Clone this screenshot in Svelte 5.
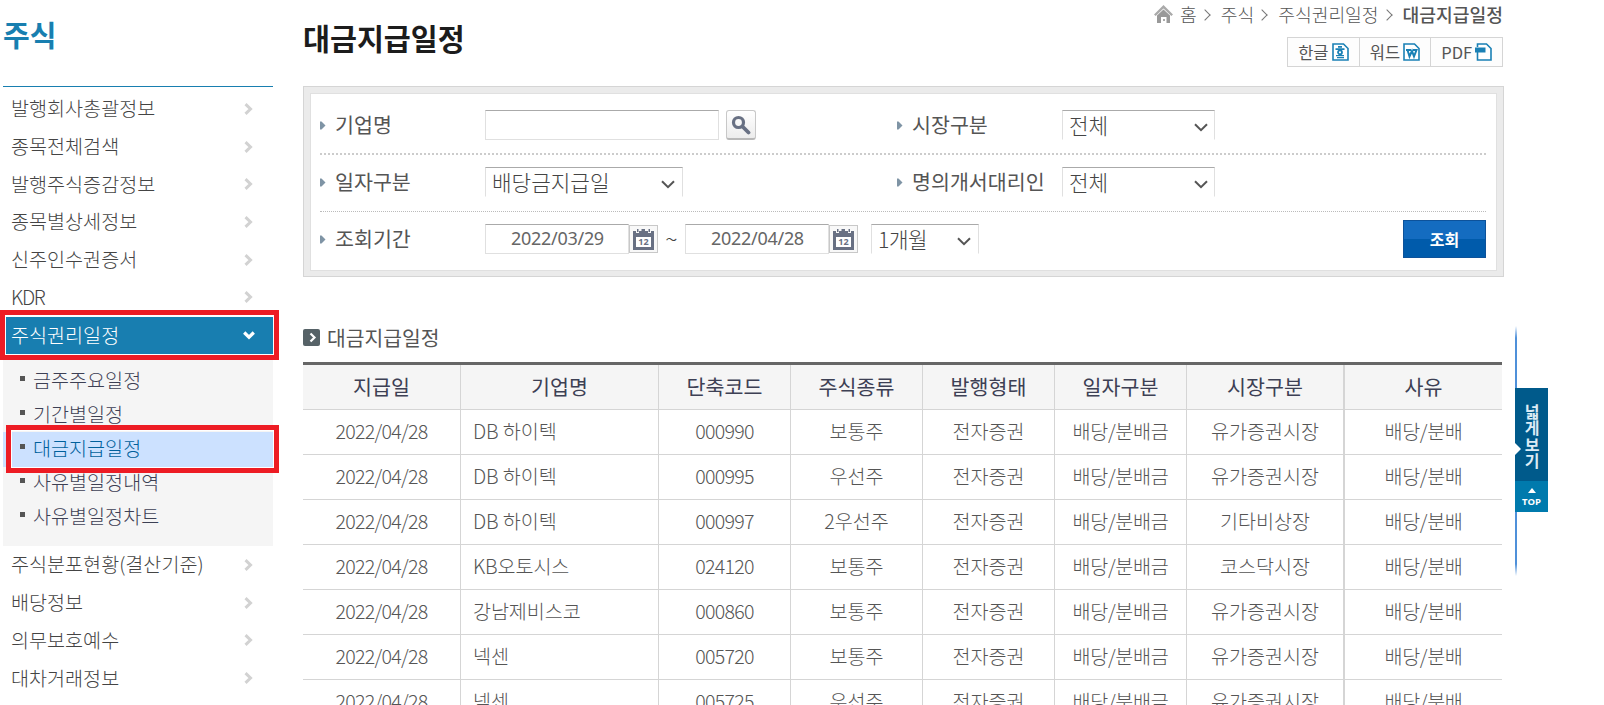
<script lang="ts">
  type MenuItem = { label: string; active?: boolean; children?: string[] };

  const menu: MenuItem[] = [
    { label: '발행회사총괄정보' },
    { label: '종목전체검색' },
    { label: '발행주식증감정보' },
    { label: '종목별상세정보' },
    { label: '신주인수권증서' },
    { label: 'KDR' },
    {
      label: '주식권리일정',
      active: true,
      children: ['금주주요일정', '기간별일정', '대금지급일정', '사유별일정내역', '사유별일정차트']
    },
    { label: '주식분포현황(결산기준)' },
    { label: '배당정보' },
    { label: '의무보호예수' },
    { label: '대차거래정보' }
  ];

  const columns = ['지급일', '기업명', '단축코드', '주식종류', '발행형태', '일자구분', '시장구분', '사유'];

  const rows = [
    ['DB 하이텍', '000990', '보통주', '유가증권시장'],
    ['DB 하이텍', '000995', '우선주', '유가증권시장'],
    ['DB 하이텍', '000997', '2우선주', '기타비상장'],
    ['KB오토시스', '024120', '보통주', '코스닥시장'],
    ['강남제비스코', '000860', '보통주', '유가증권시장'],
    ['넥센', '005720', '보통주', '유가증권시장'],
    ['넥센', '005725', '우선주', '유가증권시장']
  ];

  let current = '대금지급일정';
  let startDate = '2022/03/29';
  let endDate = '2022/04/28';
</script>

{#snippet arrow()}
  <svg class="arrow" width="6" height="9" viewBox="0 0 6 9"><path d="M0 0.5h1.5L5.5 4.5 1.5 8.5H0z" fill="#7f94a5" /></svg>
{/snippet}

{#snippet select(text: string, size: string)}
  <div class="select {size}">
    <span>{text}</span>
    <svg width="14" height="9" viewBox="0 0 14 9"><path d="M1 1.2l6 6 6-6" fill="none" stroke="#555" stroke-width="2" /></svg>
  </div>
{/snippet}

{#snippet dateField(value: string)}
  <div class="date">
    <div class="field">{value}</div>
    <button class="cal" aria-label="달력">
      <svg width="21" height="21" viewBox="0 0 21 21">
        <path d="M0 2h3v2h3V2h9v2h3V2h3v19H0z" fill="#687083" />
        <path d="M4 0h1.5v3H4zM8.5 0H12v2H8.5zM15.5 0H17v3h-1.5z" fill="#687083" />
        <rect x="3" y="8" width="15" height="10" fill="#fff" />
        <text x="10.5" y="16.3" text-anchor="middle" font-size="9" font-weight="700" fill="#687083">12</text>
      </svg>
    </button>
  </div>
{/snippet}

<div class="page">
  <aside>
    <h2>주식</h2>
    <ul class="menu">
      {#each menu as item}
        <li>
          <div class="item" class:active={item.active}>
            <span class:latin={item.label === 'KDR'}>{item.label}</span>
            {#if item.active}
              <svg width="12" height="9" viewBox="0 0 12 9"><path d="M1.2 1.5L6 6.2l4.8-4.7" fill="none" stroke="#fff" stroke-width="3.2" /></svg>
            {:else}
              <svg width="9" height="12" viewBox="0 0 9 12"><path d="M1.5 1.2L6.5 6l-5 4.8" fill="none" stroke="#d2d2d2" stroke-width="3" /></svg>
            {/if}
          </div>
          {#if item.children}
            <ul class="sub">
              {#each item.children as child}
                <li class:current={child === current}><span>{child}</span></li>
              {/each}
            </ul>
          {/if}
        </li>
      {/each}
    </ul>
  </aside>

  <main>
    <header>
      <h1>대금지급일정</h1>
      <div class="tools">
        <nav>
          <svg width="19" height="18" viewBox="0 0 19 18">
            <path d="M9.5 0L19 9.5 17.3 11 9.5 3.5 1.7 11 0 9.5z" fill="#aaa" />
            <path d="M3 10.5L9.5 4.5 16 10.5V18h-3.5v-6H7v6H3z" fill="#999" />
            <path d="M9 14h2v2H9z" fill="#aaa" />
          </svg>
          <span class="home">홈</span>
          <i></i><span>주식</span>
          <i></i><span>주식권리일정</span>
          <i></i><strong>대금지급일정</strong>
        </nav>
        <div class="export">
          <button>한글<svg width="17" height="18" viewBox="0 0 17 18">
              <path d="M1 1h10.5L16 5.5V17H1z" fill="#fff" stroke="#1a80b5" stroke-width="1.6" />
              <path d="M6 3.8h4M3.500 6.200h9" fill="none" stroke="#1a80b5" stroke-width="1.8" />
              <circle cx="8" cy="9.300" r="2" fill="none" stroke="#1a80b5" stroke-width="1.8" />
              <path d="M4 12.700h8M5 14.700h7" stroke="#1a80b5" stroke-width="1.300" />
            </svg></button>
          <button>워드<svg width="17" height="18" viewBox="0 0 17 18">
              <path d="M1 1h10.5L16 5.5V17H1z" fill="#fff" stroke="#1a80b5" stroke-width="1.6" />
              <path d="M3 7h5M4.500 7l2 6.500L9 8l2 5.500L13.500 7H10" fill="none" stroke="#1a80b5" stroke-width="2" />
            </svg></button>
          <button>PDF<svg width="17" height="18" viewBox="0 0 17 18">
              <path d="M2.500 8v9H16V5.500L11.500 1h-9v3" fill="#fff" stroke="#1a80b5" stroke-width="1.600" />
              <path d="M0 4.500h10.500v5H0z" fill="#1a80b5" />
            </svg></button>
        </div>
      </div>
    </header>

    <section class="search">
      <div class="inner">
        <div class="row">
          {@render arrow()}<label for="company">기업명</label>
          <div class="left">
            <input id="company" type="text" />
            <button class="find" aria-label="검색">
              <svg width="20" height="20" viewBox="0 0 20 20">
                <circle cx="7.5" cy="7.5" r="5" fill="none" stroke="#687083" stroke-width="3.2" />
                <path d="M11.5 11.5l6 6" stroke="#687083" stroke-width="3.8" stroke-linecap="round" />
              </svg>
            </button>
          </div>
          {@render arrow()}<span class="label">시장구분</span>
          {@render select('전체', 'mid')}
        </div>
        <div class="row">
          {@render arrow()}<span class="label">일자구분</span>
          <div class="left">{@render select('배당금지급일', 'wide')}</div>
          {@render arrow()}<span class="label">명의개서대리인</span>
          {@render select('전체', 'mid')}
        </div>
        <div class="row">
          {@render arrow()}<span class="label">조회기간</span>
          {@render dateField(startDate)}
          <span class="tilde">~</span>
          {@render dateField(endDate)}
          {@render select('1개월', 'small')}
          <button class="submit">조회</button>
        </div>
      </div>
    </section>

    <h3>
      <svg width="17" height="17" viewBox="0 0 17 17">
        <rect width="17" height="17" rx="2" fill="#566267" />
        <path d="M7.5 4.5l4 4-4 4" fill="none" stroke="#fff" stroke-width="2.2" />
      </svg>
      <span>대금지급일정</span>
    </h3>
    <table>
      <colgroup>
        <col class="c-date" /><col class="c-name" /><col /><col /><col /><col /><col class="c-date" /><col class="c-last" />
      </colgroup>
      <thead>
        <tr>
          {#each columns as column}<th>{column}</th>{/each}
        </tr>
      </thead>
      <tbody>
        {#each rows as [name, code, kind, market]}
          <tr>
            <td class="num">{endDate}</td>
            <td class="name">{name}</td>
            <td class="num">{code}</td>
            <td>{kind}</td>
            <td>전자증권</td>
            <td class="tight">배당/분배금</td>
            <td>{market}</td>
            <td class="tight">배당/분배</td>
          </tr>
        {/each}
      </tbody>
    </table>
  </main>

  <div class="rail">
    <div class="widen">
      <svg width="6" height="12" viewBox="0 0 6 12"><path d="M0 0l6 6-6 6z" fill="#fff" /></svg>
      <span>넓게보기</span>
    </div>
    <div class="top">
      <svg width="8" height="5" viewBox="0 0 8 5"><path d="M0 5l4-5 4 5z" fill="#fff" /></svg>
      TOP
    </div>
  </div>
</div>

<style>
  :global(body) {
    background: #fff;
    overflow: hidden;
  }

  .page {
    position: relative;
    display: flex;
    width: 1604px;
    height: 705px;
    overflow: hidden;
    box-sizing: border-box;
    padding-left: 3px;
    font-family: 'Noto Sans CJK KR', sans-serif;
    font-size: 19.6px;
    font-weight: 300;
    color: #444;
  }

  .page * {
    box-sizing: border-box;
  }

  button {
    font-family: inherit;
    padding: 0;
  }

  ul {
    list-style: none;
    margin: 0;
    padding: 0;
  }

  aside {
    width: 270px;
    margin-right: 30px;
    flex-shrink: 0;
  }

  h2 {
    height: 87px;
    margin: 0;
    line-height: 69px;
    font-size: 29px;
    font-weight: 700;
    color: #187fb0;
    border-bottom: 1px solid #187fb0;
  }

  .menu {
    padding-top: 3px;
  }

  .item {
    display: flex;
    align-items: center;
    justify-content: space-between;
    height: 37.7px;
    padding: 0 20px 0 8px;
    white-space: nowrap;
  }

  .item span {
    padding-bottom: 2px;
  }

  .latin {
    letter-spacing: -1.3px;
  }

  .item.active {
    position: relative;
    height: 37px;
    margin-top: 1px;
    background: #187eb0;
    color: #fff;
    padding-right: 18px;
  }

  /* red markers over the selected entries */
  .item.active::after,
  .current::after {
    content: '';
    position: absolute;
    border: 5px solid #ed1c24;
  }

  .item.active::after {
    inset: -7px -6px -6px -3px;
    z-index: 1;
    box-shadow: inset 0 0 0 1px #fff;
  }

  .sub {
    height: 191px;
    margin-top: 1px;
    padding-top: 9px;
    background: #f5f5f5;
    color: #3d4054;
  }

  .sub li {
    display: flex;
    align-items: center;
    height: 34px;
    padding-left: 17px;
  }

  .sub li span {
    padding-bottom: 4px;
  }

  .sub li::before {
    content: '';
    width: 5px;
    height: 5px;
    margin: -6px 8px 0 0;
    background: #555;
  }

  .sub .current {
    position: relative;
    height: 35px;
    margin-bottom: -1px;
    background: #cce1ff;
    color: #00609c;
  }

  .current::after {
    inset: -7px -6px -6px 3px;
    box-shadow: inset 0 0 0 1px #fff;
  }

  main {
    width: 1201px;
    flex-shrink: 0;
  }

  header {
    display: flex;
    justify-content: space-between;
    height: 86px;
  }

  h1 {
    margin: 0;
    line-height: 75px;
    font-size: 29.3px;
    font-weight: 700;
    color: #1c1c1c;
  }

  .tools {
    display: flex;
    flex-direction: column;
    align-items: flex-end;
    padding: 1px 1px 0 0;
  }

  nav {
    display: flex;
    align-items: center;
    height: 26px;
    font-size: 18.2px;
    color: #555;
  }

  nav .home {
    margin-left: 7px;
  }

  nav i {
    width: 8px;
    height: 8px;
    margin: 2px 12px 0 4px;
    border: solid #777;
    border-width: 1px 1px 0 0;
    transform: rotate(45deg);
  }

  nav strong {
    font-weight: 500;
  }

  .export {
    display: flex;
    margin-top: 10px;
    border: 1px solid #d5d5d5;
    height: 30px;
    width: 216px;
  }

  .export button {
    display: flex;
    align-items: center;
    justify-content: center;
    flex: 1;
    gap: 3px;
    border: 0;
    border-left: 1px solid #d5d5d5;
    background: #fdfdfd;
    font-size: 16.5px;
    color: #555;
  }

  .export button:first-child {
    border-left: 0;
  }

  .search {
    height: 191px;
    padding: 6px;
    border: 1px solid #d5d5d5;
    background: #ebebeb;
  }

  .inner {
    height: 179px;
    margin-bottom: -2px;
    padding: 4px 10px 0 9px;
    border: 1px solid #e0e0e0;
    background: #fff;
    height: 178px;
  }

  .row {
    display: flex;
    align-items: center;
    height: 57px;
    padding-bottom: 1px;
    border-bottom: 2px dotted #ccc;
  }

  .row:nth-child(2) {
    padding-bottom: 2px;
    border-bottom: 1px dotted #bbb;
  }

  .row:last-child {
    padding-bottom: 3px;
    border: 0;
  }

  .arrow {
    flex-shrink: 0;
    margin-right: 9px;
  }

  label,
  .label {
    width: 150px;
    padding-bottom: 2px;
    font-size: 20.6px;
    font-weight: 400;
    color: #555;
    white-space: nowrap;
  }

  .left {
    display: flex;
    gap: 7px;
    width: 412px;
  }

  input,
  .select,
  .field {
    height: 30px;
    border: 1px solid #e0e0e0;
    border-top-color: #aaa;
    border-radius: 0;
    background: #fff;
  }

  input {
    width: 234px;
    padding: 0;
  }

  .find,
  .cal {
    display: flex;
    align-items: center;
    justify-content: center;
    border: 1px solid #c8c8c8;
  }

  .find {
    width: 30px;
    height: 30px;
    border-radius: 3px;
    border-bottom: 2px solid #b8b8b8;
    background: linear-gradient(#fff, #ececec);
  }

  .select {
    display: flex;
    align-items: center;
    justify-content: space-between;
    padding: 2px 6px 0 6px;
    border-bottom-color: #fff;
    font-size: 21.3px;
    line-height: 26px;
    color: #444;
  }

  .select span {
    margin-top: -2px;
  }

  .select svg {
    margin-top: 2px;
  }

  .select.wide {
    width: 198px;
    padding-right: 7px;
  }

  .select.mid {
    width: 153px;
  }

  .select.small {
    width: 108px;
    margin-left: 13px;
    padding-right: 7px;
    letter-spacing: -0.5px;
  }

  .date {
    display: flex;
    align-items: center;
  }

  .field {
    width: 144px;
    padding-left: 1px;
    text-align: center;
    font: 400 18px/27px 'Noto Sans', sans-serif;
    letter-spacing: -0.3px;
    color: #666;
  }

  .cal {
    width: 29px;
    height: 28px;
    background: #f8f8f8;
    font-family: 'Open Sans', sans-serif;
  }

  .tilde {
    width: 27px;
    padding-bottom: 3px;
    text-align: center;
    font-size: 23px;
    line-height: 24px;
  }

  .submit {
    width: 83px;
    height: 38px;
    margin-left: auto;
    border: 1px solid #0d529a;
    background: linear-gradient(#146cc0 50%, #005bab 50%);
    color: #fff;
    font-size: 16px;
    font-weight: 700;
  }

  h3 {
    display: flex;
    align-items: center;
    gap: 7px;
    height: 48px;
    margin: 37px 0 0;
    padding-bottom: 1px;
    font-size: 20.4px;
    font-weight: 400;
    color: #555;
  }

  h3 span {
    padding-bottom: 1px;
  }

  table {
    width: 1199px;
    table-layout: fixed;
    border-collapse: separate;
    border-spacing: 0;
    border-top: 3px solid #666;
  }

  col {
    width: 132px;
  }

  .c-date {
    width: 158px;
  }

  .c-name {
    width: 198px;
  }

  .c-last {
    width: 157px;
  }

  th,
  td {
    height: 45px;
    padding: 0 0 3px;
    border-right: 1px solid #d5d5d5;
    border-bottom: 1px solid #d5d5d5;
    text-align: center;
    line-height: 30px;
    font-weight: 300;
    color: #555;
    white-space: nowrap;
  }

  th {
    background: #f5f5f5;
    font-size: 20.6px;
    font-weight: 400;
    color: #3d4054;
  }

  th:nth-child(7),
  td:nth-child(7) {
    border-right-width: 2px;
  }

  th:last-child,
  td:last-child {
    border-right: 0;
  }

  .num {
    letter-spacing: -0.75px;
  }

  .tight {
    letter-spacing: -0.35px;
  }

  .name {
    padding-left: 12px;
    text-align: left;
    letter-spacing: -0.1px;
  }

  .rail {
    position: absolute;
    left: 1515px;
    top: 326px;
    width: 33px;
    height: 250px;
    padding-top: 62px;
    background: linear-gradient(transparent, #4f90d9 12px, #4f90d9 238px, transparent) left / 2px 100% no-repeat;
    color: #fff;
    font-weight: 700;
  }

  .widen {
    position: relative;
    display: flex;
    justify-content: center;
    height: 93px;
    padding-top: 16px;
    background: #005a8b;
    color: #dcebf5;
  }

  .widen span {
    writing-mode: vertical-rl;
    font-size: 16px;
    line-height: 33px;
    letter-spacing: 0.3px;
    white-space: nowrap;
  }

  .widen svg {
    position: absolute;
    left: 0;
    top: 55px;
  }

  .top {
    display: flex;
    flex-direction: column;
    align-items: center;
    height: 31px;
    padding-top: 7px;
    background: #007aad;
    font: 700 9.5px/17px 'Open Sans', sans-serif;
  }
</style>
